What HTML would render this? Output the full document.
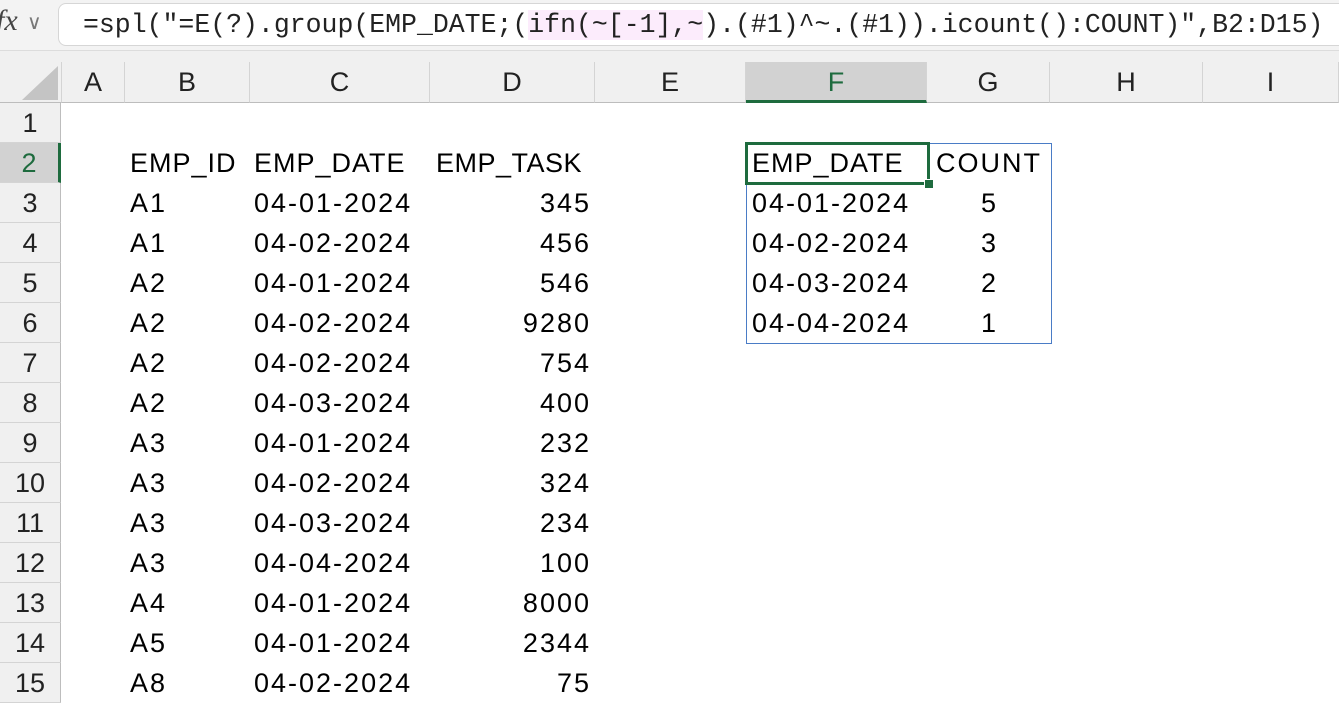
<!DOCTYPE html><html><head><style>
body{margin:0;width:1339px;height:705px;overflow:hidden;background:#fff;font-family:"Liberation Sans",sans-serif;position:relative}
.a{position:absolute;white-space:nowrap}
.t{font-size:27px;color:#000;line-height:40px;letter-spacing:2px}
.ch{position:absolute;top:62px;height:41px;background:#f0f0f0;border-right:1px solid #d4d4d4;border-bottom:1px solid #bdbdbd;box-sizing:border-box;text-align:center;font-size:27px;line-height:41px;color:#222}
.rh{position:absolute;left:0;width:61px;height:40px;background:#f0f0f0;border-bottom:1px solid #d4d4d4;border-right:1px solid #bdbdbd;box-sizing:border-box;text-align:center;font-size:27px;line-height:40px;color:#222}
</style></head><body>
<div class="a" style="left:0;top:0;width:1339px;height:50px;background:#f3f3f3;border-bottom:1px solid #dcdcdc"></div>
<div class="a" style="left:-4px;top:4px;font-family:'Liberation Serif',serif;font-style:italic;font-size:30px;color:#444">fx</div>
<div class="a" style="left:27px;top:10px;font-size:20px;color:#777">&#8744;</div>
<div class="a" style="left:58px;top:3px;width:1290px;height:43px;background:#fff;border:1px solid #d6d6d6;border-radius:8px;box-sizing:border-box"></div>
<div class="a" style="left:83px;top:5px;font-family:'Liberation Mono',monospace;font-size:26.5px;line-height:40px;color:#222">=spl("=E(?).group(EMP_DATE;(<span style="background:#fcecfc">ifn(~[-1],~</span>).(#1)^~.(#1)).icount():COUNT)",B2:D15)</div>
<div class="a" style="left:0;top:51px;width:1339px;height:11px;background:#f0f0f0"></div>
<div class="ch" style="left:0;width:62px"></div>
<svg class="a" style="left:20px;top:64px" width="40" height="38"><polygon points="38,2 38,36 2,36" fill="#c4c4c4"/></svg>
<div class="ch" style="left:62px;width:63px">A</div>
<div class="ch" style="left:125px;width:125px">B</div>
<div class="ch" style="left:250px;width:180px">C</div>
<div class="ch" style="left:430px;width:165px">D</div>
<div class="ch" style="left:595px;width:151px">E</div>
<div class="ch" style="left:746px;width:181px;background:#d2d2d2;color:#1e6b3e;border-bottom:3px solid #1e6b3e">F</div>
<div class="ch" style="left:927px;width:123px">G</div>
<div class="ch" style="left:1050px;width:153px">H</div>
<div class="ch" style="left:1203px;width:136px">I</div>
<div class="rh" style="top:103px">1</div>
<div class="rh" style="top:143px;background:#d2d2d2;color:#1e6b3e;border-right:3px solid #1e6b3e">2</div>
<div class="rh" style="top:183px">3</div><div class="rh" style="top:223px">4</div><div class="rh" style="top:263px">5</div><div class="rh" style="top:303px">6</div><div class="rh" style="top:343px">7</div><div class="rh" style="top:383px">8</div><div class="rh" style="top:423px">9</div><div class="rh" style="top:463px">10</div><div class="rh" style="top:503px">11</div><div class="rh" style="top:543px">12</div><div class="rh" style="top:583px">13</div><div class="rh" style="top:623px">14</div><div class="rh" style="top:663px">15</div>
<div class="a t" style="left:130px;top:143px;letter-spacing:1px">EMP_ID</div>
<div class="a t" style="left:254px;top:143px;letter-spacing:1px">EMP_DATE</div>
<div class="a t" style="left:436px;top:143px;letter-spacing:0.5px">EMP_TASK</div>
<div class="a t" style="left:130px;top:183px">A1<br>A1<br>A2<br>A2<br>A2<br>A2<br>A3<br>A3<br>A3<br>A3<br>A4<br>A5<br>A8</div>
<div class="a t" style="left:254px;top:183px">04-01-2024<br>04-02-2024<br>04-01-2024<br>04-02-2024<br>04-02-2024<br>04-03-2024<br>04-01-2024<br>04-02-2024<br>04-03-2024<br>04-04-2024<br>04-01-2024<br>04-01-2024<br>04-02-2024</div>
<div class="a t" style="right:748px;top:183px;text-align:right">345<br>456<br>546<br>9280<br>754<br>400<br>232<br>324<br>234<br>100<br>8000<br>2344<br>75</div>
<div class="a" style="left:746px;top:143px;width:306px;height:201px;border:1px solid #4a7cc6;box-sizing:border-box"></div>
<div class="a" style="left:745px;top:142px;width:185px;height:43px;border:3px solid #1e6b3e;box-sizing:border-box"></div>
<div class="a" style="left:924px;top:179px;width:8px;height:8px;background:#1e6b3e;border:1px solid #fff"></div>
<div class="a t" style="left:752px;top:143px;letter-spacing:1px">EMP_DATE</div>
<div class="a t" style="left:936px;top:143px">COUNT</div>
<div class="a t" style="left:752px;top:183px">04-01-2024<br>04-02-2024<br>04-03-2024<br>04-04-2024</div>
<div class="a t" style="left:981px;top:183px">5<br>3<br>2<br>1</div>
</body></html>
